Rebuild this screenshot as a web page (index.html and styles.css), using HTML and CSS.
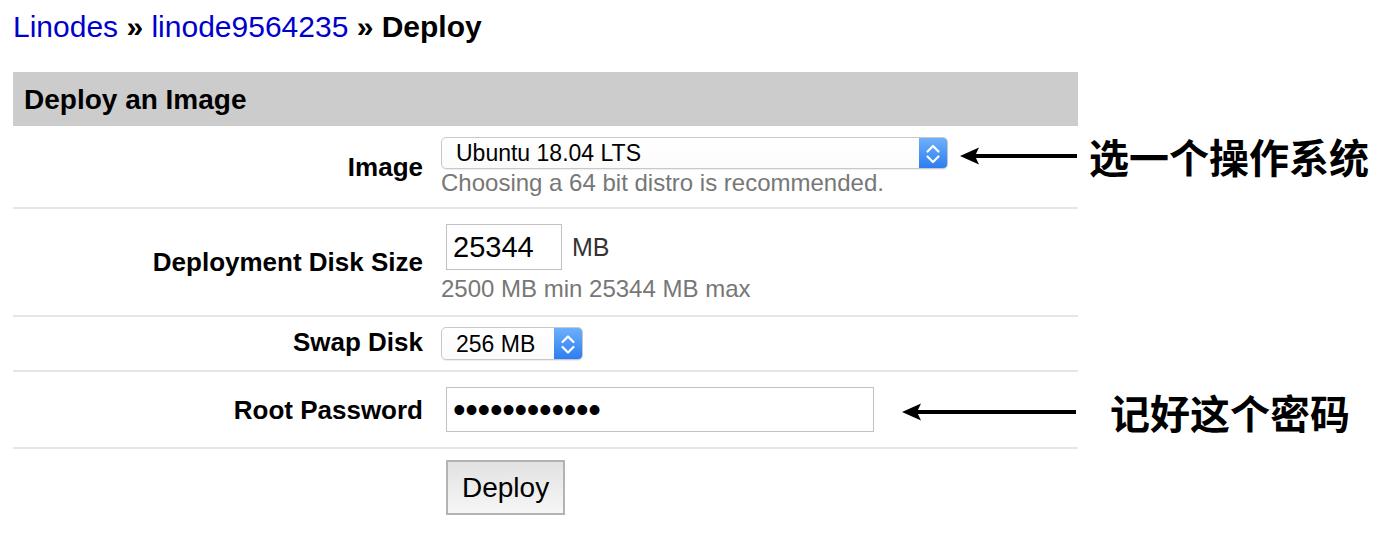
FILE: index.html
```html
<!DOCTYPE html>
<html lang="en">
<head>
<meta charset="utf-8">
<title>Deploy</title>
<link rel="stylesheet" href="styles.css">
</head>
<body>
<div class="page">
  <h1 class="crumbs"><a class="crumb-link" href="#">Linodes</a> » <a class="crumb-link" href="#">linode9564235</a> » Deploy</h1>

  <div class="panel">
    <div class="panel-head">Deploy an Image</div>

    <div class="row">
      <div class="label">Image</div>
      <div class="field field-image">
        <div class="select select-wide">
          <span class="select-text">Ubuntu 18.04 LTS</span>
          <span class="stepper">
            <svg width="28" height="32" viewBox="0 0 28 32"><path d="M8.5 13.5 L14 8 L19.5 13.5 M8.5 18.5 L14 24 L19.5 18.5" fill="none" stroke="#fff" stroke-width="2.2" stroke-linecap="round" stroke-linejoin="round"/></svg>
          </span>
        </div>
        <div class="hint">Choosing a 64 bit distro is recommended.</div>
      </div>
    </div>

    <div class="row">
      <div class="label">Deployment Disk Size</div>
      <div class="field field-disk">
        <div class="size-line">
          <input class="text-input size-input" type="text" value="25344">
          <span class="unit">MB</span>
        </div>
        <div class="hint hint-size">2500 MB min 25344 MB max</div>
      </div>
    </div>

    <div class="row">
      <div class="label label-swap">Swap Disk</div>
      <div class="field field-swap">
        <div class="select select-small">
          <span class="select-text">256 MB</span>
          <span class="stepper">
            <svg width="28" height="33" viewBox="0 0 28 33"><path d="M8.5 14 L14 8.5 L19.5 14 M8.5 19 L14 24.5 L19.5 19" fill="none" stroke="#fff" stroke-width="2.2" stroke-linecap="round" stroke-linejoin="round"/></svg>
          </span>
        </div>
      </div>
    </div>

    <div class="row">
      <div class="label">Root Password</div>
      <div class="field field-pass">
        <input class="text-input pass-input" type="password" value="rootpass1234">
      </div>
    </div>

    <div class="row row-last">
      <div class="label"></div>
      <div class="field field-button">
        <button class="deploy-btn" type="button">Deploy</button>
      </div>
    </div>
  </div>

  <div class="note note-os">
    <svg class="arrow" width="117" height="20" viewBox="0 0 117 20"><line x1="14" y1="10" x2="117" y2="10" stroke="#000" stroke-width="4"/><polygon points="0,10 19,1.5 15,10 19,18.5" fill="#000"/></svg>
    <span class="note-text">选一个操作系统</span>
  </div>

  <div class="note note-pass">
    <svg class="arrow" width="174" height="20" viewBox="0 0 174 20"><line x1="14" y1="10" x2="174" y2="10" stroke="#000" stroke-width="4"/><polygon points="0,10 19,1.5 15,10 19,18.5" fill="#000"/></svg>
    <span class="note-text">记好这个密码</span>
  </div>
</div>
</body>
</html>
```

FILE: styles.css
```css
html, body {
  margin: 0;
  padding: 0;
  background: #fff;
}

body {
  font-family: "Liberation Sans", Arial, Helvetica, sans-serif;
  color: #000;
}

.page {
  position: relative;
  width: 1392px;
  height: 534px;
  padding-left: 13px;
  box-sizing: border-box;
  overflow: hidden;
}

.crumbs {
  margin: 10px 0 28px 0;
  font-size: 30px;
  line-height: 34px;
  font-weight: 700;
}

.crumb-link {
  color: #0000cc;
  font-weight: 400;
  text-decoration: none;
}

.panel {
  width: 1065px;
}

.panel-head {
  background: #cccccc;
  height: 54px;
  box-sizing: border-box;
  padding: 12px 0 10px 11px;
  font-size: 28px;
  line-height: 32px;
  font-weight: 700;
}

.row {
  display: grid;
  grid-template-columns: 428px 1fr;
  align-items: center;
  border-bottom: 2px solid #e6e6e6;
}

.row-last {
  border-bottom: none;
  align-items: start;
}

.label {
  text-align: right;
  padding-right: 18px;
  font-size: 26px;
  line-height: 30px;
  font-weight: 700;
}

.label-swap {
  position: relative;
  top: -2px;
}

.field-image {
  padding: 11px 0 11px 0;
}

.field-disk {
  padding: 15px 0 13px 0;
}

.field-swap {
  padding: 10px 0 10px 0;
}

.field-pass {
  padding: 15px 0 15px 0;
}

.field-button {
  padding: 11px 0 19px 0;
}

.select {
  display: flex;
  align-items: center;
  box-sizing: border-box;
  border: 1px solid #c8c8c8;
  border-radius: 5px;
  background: linear-gradient(#ffffff, #fbfbfb);
  box-shadow: 0 1px 1px rgba(0, 0, 0, 0.07);
  overflow: hidden;
  font-size: 23px;
  color: #000;
}

.select-wide {
  width: 507px;
  height: 32px;
}

.select-small {
  width: 142px;
  height: 33px;
}

.select-text {
  flex: 1;
  padding-left: 14px;
  line-height: 30px;
  white-space: nowrap;
}

.stepper {
  display: flex;
  align-self: stretch;
  width: 28px;
  background: linear-gradient(#6eb0fa, #2d7df1);
}

.stepper svg {
  display: block;
  margin: auto;
}

.hint {
  font-size: 24px;
  line-height: 27px;
  color: #777777;
}

.hint-size {
  margin-top: 5px;
}

.size-line {
  display: flex;
  align-items: center;
}

.text-input {
  box-sizing: border-box;
  margin: 0 0 0 5px;
  border: 1px solid #c2c2c2;
  border-radius: 0;
  background: #fff;
  font-family: "Liberation Sans", Arial, Helvetica, sans-serif;
  color: #000;
  outline: none;
}

.size-input {
  width: 116px;
  height: 46px;
  padding: 0 0 0 6px;
  font-size: 29px;
}

.unit {
  margin-left: 10px;
  font-size: 25px;
  color: #333;
}

.pass-input {
  width: 428px;
  height: 45px;
  padding: 0 0 0 6px;
  font-size: 36px;
  letter-spacing: -0.3px;
}

.deploy-btn {
  margin-left: 5px;
  height: 55px;
  padding: 0 14px;
  border: 2px solid #b3b3b3;
  border-radius: 0;
  background: linear-gradient(#e2e2e2, #f6f6f6);
  font-family: "Liberation Sans", Arial, Helvetica, sans-serif;
  font-size: 28px;
  color: #000;
}

.note {
  position: absolute;
  display: flex;
  align-items: center;
  height: 40px;
}

.note-os {
  left: 960px;
  top: 136px;
}

.note-pass {
  left: 902px;
  top: 392px;
}

.arrow {
  display: block;
}

.note-text {
  font-family: "Noto Sans CJK SC", "Noto Sans CJK JP", sans-serif;
  font-size: 40px;
  line-height: 40px;
  font-weight: 700;
  color: #000;
  white-space: nowrap;
}

.note-os .note-text {
  margin-left: 12px;
}

.note-pass .note-text {
  margin-left: 34px;
}
```
